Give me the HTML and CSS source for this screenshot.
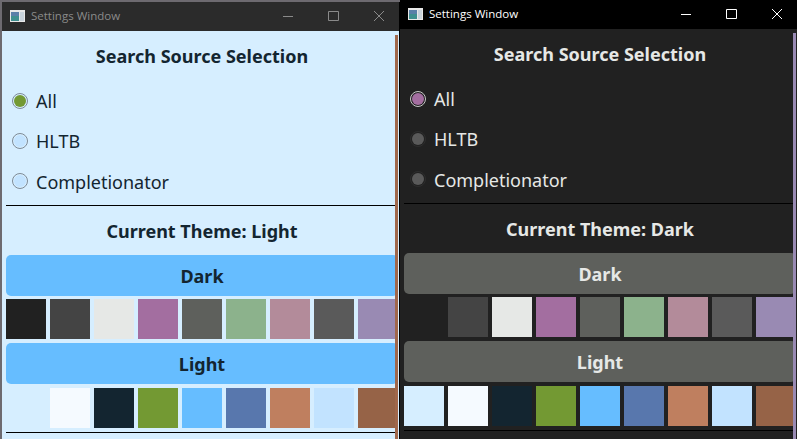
FILE: index.html
```html
<!DOCTYPE html>
<html lang="en">
<head>
<meta charset="utf-8">
<title>Settings Window</title>
<link rel="stylesheet" href="styles.css">
</head>
<body>
<div class="desktop">
  <section class="window light">
    <header class="titlebar">
      <svg class="app-icon" viewBox="0 0 15 12" width="15" height="12"><rect width="15" height="12" fill="#e8e8e8"/><rect x="1" y="2" width="8" height="9" fill="#3f8f8f"/><rect x="1" y="2" width="8" height="4" fill="#5a7fa8"/><rect x="10" y="2" width="4" height="9" fill="#c9d3dc"/></svg>
      <span class="win-title">Settings Window</span>
      <svg class="controls" viewBox="0 0 116 12" width="116" height="12"><path d="M0 6.500H10M45.500 1.500H55.500V10.500H45.500ZM91 1L101 11M101 1L91 11" fill="none" stroke="currentColor"/></svg>
    </header>
    <main class="content">
      <h2 class="heading first">Search Source Selection</h2>
      <div class="radio checked"><span class="dot"></span>All</div>
      <div class="radio"><span class="dot"></span>HLTB</div>
      <div class="radio last"><span class="dot"></span>Completionator</div>
      <hr class="rule">
      <h2 class="heading second">Current Theme: Light</h2>
      <button class="theme-btn">Dark</button>
      <div class="swatches">
        <i class="sw d1"></i><i class="sw d2"></i><i class="sw d3"></i><i class="sw d4"></i><i class="sw d5"></i><i class="sw d6"></i><i class="sw d7"></i><i class="sw d8"></i><i class="sw d9"></i>
      </div>
      <button class="theme-btn">Light</button>
      <div class="swatches">
        <i class="sw l1"></i><i class="sw l2"></i><i class="sw l3"></i><i class="sw l4"></i><i class="sw l5"></i><i class="sw l6"></i><i class="sw l7"></i><i class="sw l8"></i><i class="sw l9"></i>
      </div>
      <hr class="rule">
    </main>
    <div class="scrollbar"></div>
  </section>
  <section class="window dark">
    <header class="titlebar">
      <svg class="app-icon" viewBox="0 0 15 12" width="15" height="12"><rect width="15" height="12" fill="#e8e8e8"/><rect x="1" y="2" width="8" height="9" fill="#3f8f8f"/><rect x="1" y="2" width="8" height="4" fill="#5a7fa8"/><rect x="10" y="2" width="4" height="9" fill="#c9d3dc"/></svg>
      <span class="win-title">Settings Window</span>
      <svg class="controls" viewBox="0 0 116 12" width="116" height="12"><path d="M0 6.500H10M45.500 1.500H55.500V10.500H45.500ZM91 1L101 11M101 1L91 11" fill="none" stroke="currentColor"/></svg>
    </header>
    <main class="content">
      <h2 class="heading first">Search Source Selection</h2>
      <div class="radio checked"><span class="dot"></span>All</div>
      <div class="radio"><span class="dot"></span>HLTB</div>
      <div class="radio last"><span class="dot"></span>Completionator</div>
      <hr class="rule">
      <h2 class="heading second">Current Theme: Dark</h2>
      <button class="theme-btn">Dark</button>
      <div class="swatches">
        <i class="sw d1"></i><i class="sw d2"></i><i class="sw d3"></i><i class="sw d4"></i><i class="sw d5"></i><i class="sw d6"></i><i class="sw d7"></i><i class="sw d8"></i><i class="sw d9"></i>
      </div>
      <button class="theme-btn">Light</button>
      <div class="swatches">
        <i class="sw l1"></i><i class="sw l2"></i><i class="sw l3"></i><i class="sw l4"></i><i class="sw l5"></i><i class="sw l6"></i><i class="sw l7"></i><i class="sw l8"></i><i class="sw l9"></i>
      </div>
      <hr class="rule">
    </main>
    <div class="scrollbar"></div>
  </section>
</div>
</body>
</html>
```
FILE: styles.css
```css
* { box-sizing: border-box; }
html, body { margin: 0; height: 100%; overflow: hidden; background: #000; }
.desktop {
  display: flex;
  height: 439px;
  width: 797px;
  font-family: "Noto Sans", sans-serif;
  background: linear-gradient(#6d6a70, #6d6a70) left top / 399px 2px no-repeat, #000;
  border-left: 2px solid #6d6a70;
}
.window {
  position: relative;
  display: flex;
  flex-direction: column;
  flex: none;
  overflow: hidden;
}
.window.light {
  width: 397px;
  margin-top: 2px;
  margin-right: 1px;
  color: #132530;
  background: #d6eeff;
  --accent: #739933;
  --btn: #66bdff;
  --thumb: #a0674b;
  --rule: #000;
  --dot: #c2e3ff;
  --ring: #7d8a96;
  --ring-on: #7d8a96;
  --title-bg: #2b2b2b;
  --title-fg: #8a8a8a;
}
.window.dark {
  width: 397px;
  color: #e6e8e6;
  background: #212121;
  --accent: #a36ea0;
  --btn: #5e605c;
  --thumb: #998ab3;
  --rule: #000;
  --dot: #5a5a5a;
  --ring: #2e2e2e;
  --ring-on: #c8c8c8;
  --title-bg: #000;
  --title-fg: #fff;
}
.titlebar {
  flex: none;
  height: 29px;
  display: flex;
  align-items: center;
  padding: 0 0 2px 8px;
  background: var(--title-bg);
  color: var(--title-fg);
}
.app-icon { flex: none; margin-right: 6px; }
.win-title { font-family: "Open Sans", sans-serif; font-size: 11.5px; }
.controls { flex: none; margin-left: auto; }
.content {
  width: 392px;
  margin-left: 4px;
  flex: none;
}
.heading {
  margin: 0;
  font-size: 18px;
  font-weight: 700;
  text-align: center;
  display: flex;
  align-items: center;
  justify-content: center;
}
.heading.first { height: 50px; }
.heading.second { height: 49px; }
.radio {
  height: 40px;
  display: flex;
  align-items: center;
  gap: 8px;
  padding-left: 6px;
  font-size: 18px;
}
.radio.last { height: 41px; padding-top: 1px; }
.radio.last .dot { margin-top: -2px; }
.dot {
  width: 16px;
  height: 16px;
  padding: 1px;
  border-radius: 50%;
  border: 1px solid var(--ring);
  background: var(--dot) content-box;
}
.checked .dot {
  border-color: var(--ring-on);
  background-color: var(--accent);
}
.rule {
  margin: 3px 0 0;
  height: 1px;
  border: 0;
  background: var(--rule);
}
.theme-btn {
  display: block;
  width: 100%;
  height: 41px;
  border: 0;
  border-radius: 5px;
  padding: 0;
  font-family: inherit;
  font-size: 18px;
  font-weight: 700;
  color: inherit;
  background: var(--btn);
}
.swatches {
  display: flex;
  gap: 4px;
  margin: 3px 0 4px;
}
.theme-btn + .swatches + .theme-btn + .swatches { margin-top: 4px; }
.sw { flex: none; width: 40px; height: 40px; display: block; }
.d1 { background: #212121; }
.d2 { background: #444444; }
.d3 { background: #e6e8e6; }
.d4 { background: #a36ea0; }
.d5 { background: #5e605c; }
.d6 { background: #8cb28c; }
.d7 { background: #b38b9a; }
.d8 { background: #5a5a5a; }
.d9 { background: #998ab3; }
.l1 { background: #d6eeff; }
.l2 { background: #f5faff; }
.l3 { background: #132530; }
.l4 { background: #739933; }
.l5 { background: #66bdff; }
.l6 { background: #5877ad; }
.l7 { background: #bf7f5f; }
.l8 { background: #c2e3ff; }
.l9 { background: #966347; }
.scrollbar {
  position: absolute;
  top: 33px;
  bottom: 0;
  right: 1px;
  width: 3px;
  background: var(--thumb);
}
```
